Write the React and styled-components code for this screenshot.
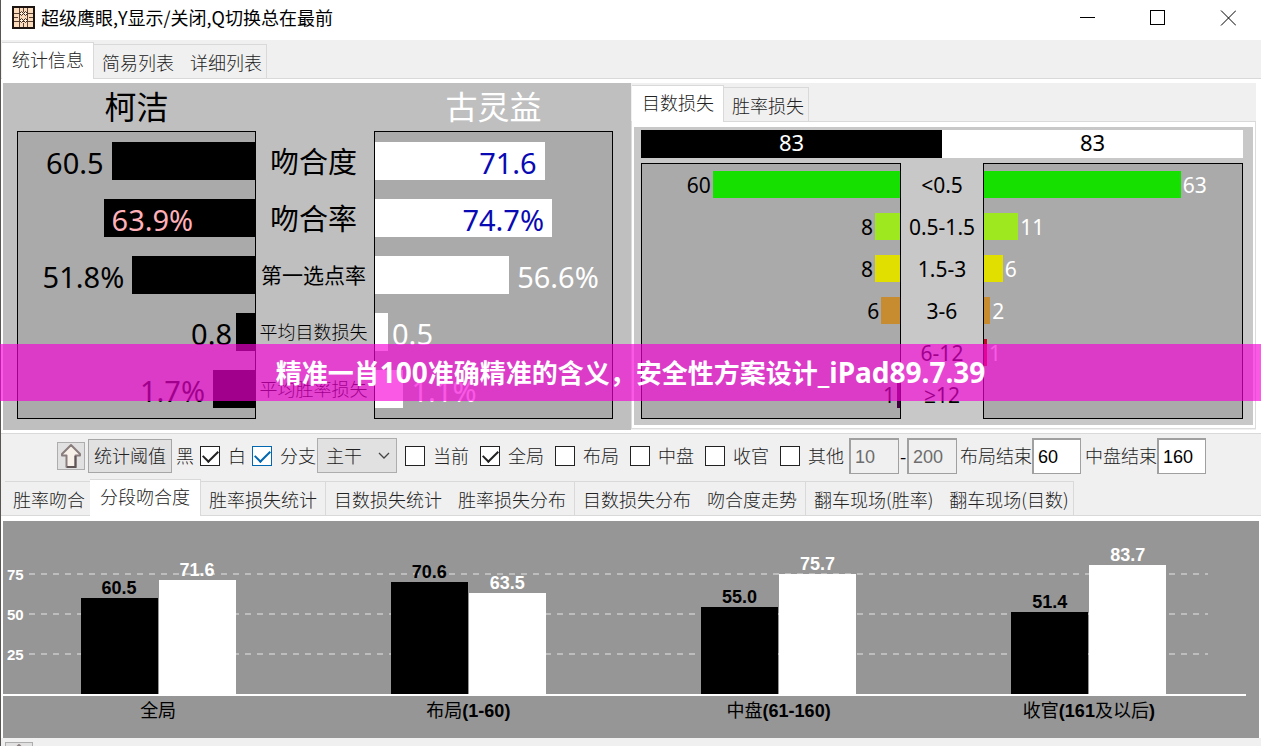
import React from "react"
import styled, { createGlobalStyle } from "styled-components"

const GlobalStyle = createGlobalStyle`
  * {
    box-sizing: border-box;
  }

  html, body {
    margin: 0;
    overflow: hidden;
  }

  body {
    background: #f0f0f0;
    color: #000;
    font-family: "Noto Sans CJK SC", sans-serif;
    font-size: 18px;
  }

  button, input, select {
    margin: 0;
    color: inherit;
    font: inherit;
  }
`;

const Window = styled.div`
  position: relative;
  min-height: 100vh;
  border-left: 1px solid #5a5454;
  background: #f0f0f0;
`;

/* title bar */

const TitleBar = styled.header`
  display: flex;
  align-items: center;
  height: 40px;
  padding-left: 11px;
  background: #fff;
`;

const Title = styled.h1`
  flex: 1;
  margin: 0 0 6px 6px;
  font-size: 18px;
  font-weight: 400;
  line-height: 24px;
`;

const WindowButtons = styled.div`
  display: flex;
  gap: 4px;
  margin-bottom: 4px;
`;

const WindowButton = styled.button`
  display: flex;
  align-items: center;
  justify-content: center;
  width: 66px;
  height: 32px;
  padding: 0;
  border: 0;
  background: none;
`;

const AppIcon = styled.svg`
  margin-bottom: 6px;
`;

/* tabs */

const TabStrip = styled.nav`
  display: flex;
  align-items: flex-end;
  height: 39px;
  padding-left: ${(props) => props.$indent || 0}px;
  border-bottom: 1px solid #d9d9d9;
  background: #f0f0f0;
`;

const Tab = styled.button`
  height: ${(props) => (props.$active ? 37 : 34)}px;
  margin-bottom: ${(props) => (props.$active ? -1 : 0)}px;
  padding: ${(props) => (props.$active ? "0 10px 4px" : "0 8px")};
  border: 0 solid #d9d9d9;
  border-top-width: 1px;
  border-right-width: ${(props) => (props.$divider || props.$active ? 1 : 0)}px;
  background: ${(props) => (props.$active ? "#fff" : "#f0f0f0")};
  color: #222;
  font-weight: 300;
  line-height: 24px;
  white-space: nowrap;

  &:first-child:not(:only-child) {
    padding-right: ${(props) => (props.$active ? 9 : 5)}px;
  }

  &:last-child {
    padding-right: 4px;
  }
`;

const Sheet = styled.section`
  padding: ${(props) => props.$top}px 2px ${(props) => props.$bottom || 0}px;
  background: #fff;
`;

const Columns = styled.div`
  display: grid;
  grid-template-columns: 1fr 1fr;
`;

/* match panel */

const MatchPanel = styled.div`
  display: grid;
  grid-template-columns: 1fr 118px 1fr;
  grid-template-rows: 48px auto;
  padding: 0 18px 11px 14px;
  background: #bfbfbf;
`;

const PlayerName = styled.h2`
  margin: 0;
  color: ${(props) => props.$color};
  font-size: 32px;
  font-weight: 400;
  line-height: 44px;
  text-align: center;
`;

const Frame = styled.div`
  display: flex;
  flex-direction: column;
  gap: ${(props) => props.$gap}px;
  padding: ${(props) => props.$pad};
  border: 1px solid #000;
  background: #aaa;
`;

const Labels = styled.div`
  display: flex;
  flex-direction: column;
  gap: ${(props) => props.$gap}px;
  padding: ${(props) => props.$pad};
  margin: 1px 0;
`;

const MatchRow = styled.div`
  display: flex;
  flex-direction: ${(props) => (props.$mirror ? "row-reverse" : "row")};
  height: 38px;
`;

const MatchBar = styled.div`
  display: flex;
  justify-content: ${(props) => (props.$mirror ? "flex-start" : "flex-end")};
  background: ${(props) => (props.$mirror ? "#000" : "#fff")};
`;

const MatchValue = styled.span`
  padding: 0 ${(props) => props.$space}px;
  color: ${(props) => props.$color};
  font-family: "Noto Sans", "Open Sans", sans-serif;
  font-size: 29px;
  line-height: 42px;
`;

const MatchLabel = styled.span`
  height: 38px;
  padding-right: 3px;
  font-size: ${(props) => props.$size}px;
  font-weight: ${(props) => (props.$size === 18 ? 300 : 400)};
  line-height: 36px;
  text-align: center;
  white-space: nowrap;
`;

/* loss panel */

const LossPanel = styled.div`
  margin-right: 3px;
  background: #f0f0f0;
`;

const LossBody = styled.div`
  padding: 5px 2px 3px;
  border: 1px solid #dcdcdc;
  border-top: 0;
  background: #fff;
`;

const LossChart = styled.div`
  display: grid;
  grid-template-columns: 1fr 82px 1fr;
  row-gap: 5px;
  padding: 3px 10px 6px 7px;
  background: #c8c8c8;
`;

const Score = styled.div`
  display: grid;
  grid-column: 1 / -1;
  grid-template-columns: 1fr 1fr;
  height: 28px;
`;

const ScoreSide = styled.div`
  background: ${(props) => props.$background};
  color: ${(props) => props.$color};
  font-family: "Noto Sans", "Open Sans", sans-serif;
  font-size: 22px;
  line-height: 24px;
  text-align: center;
`;

const LossRow = styled.div`
  display: flex;
  flex-direction: ${(props) => (props.$mirror ? "row-reverse" : "row")};
  gap: 2px;
  height: 27px;
  color: ${(props) => (props.$mirror ? "#000" : "#fff")};
`;

const LossBar = styled.div`
  background: ${(props) => props.$color};
`;

const LossText = styled.span`
  height: 27px;
  font-family: "Noto Sans", "Open Sans", sans-serif;
  font-size: 21px;
  line-height: 29px;
  text-align: center;
`;

/* toolbar */

const Toolbar = styled.form`
  display: flex;
  align-items: center;
  height: 44px;
  padding-left: 56px;
  border-top: 1px solid #d9d9d9;
  color: #222;
  font-weight: 300;
  line-height: 24px;
  white-space: nowrap;
`;

const IconButton = styled.button`
  display: flex;
  align-items: center;
  justify-content: center;
  width: 28px;
  height: 28px;
  margin-right: 3px;
  padding: 0;
  border: 1px solid #adadad;
  background: #e1e1e1;
`;

const PushButton = styled.button`
  width: 84px;
  height: 34px;
  margin-right: 4px;
  padding: 0 0 2px;
  border: 1px solid #a6a6a6;
  background: #e1e1e1;
`;

const Caption = styled.label`
  padding-bottom: 2px;
  margin-right: ${(props) => props.$space || 0}px;
`;

const CheckBox = styled.input.attrs({ type: "checkbox" })`
  display: flex;
  justify-content: center;
  width: 20px;
  height: 20px;
  margin-right: 8px;
  appearance: none;
  border: 1px solid ${(props) => (props.$focus ? "#0067b0" : "#222")};
  background: #fff;
  color: ${(props) => (props.$focus ? "#0067b0" : "#222")};

  &:checked::after {
    content: "";
    width: 7px;
    height: 13px;
    border: solid currentColor;
    border-width: 0 2px 2px 0;
    transform: rotate(45deg);
  }
`;

const SelectBox = styled.div`
  display: grid;
  align-items: center;
  width: 80px;
  margin-right: 8px;

  > * {
    grid-area: 1 / 1;
  }

  > svg {
    justify-self: end;
    margin-right: 7px;
    pointer-events: none;
  }
`;

const Select = styled.select`
  width: 80px;
  height: 35px;
  padding: 0 8px 2px;
  appearance: none;
  border: 1px solid #adadad;
  border-radius: 0;
  background: #e1e1e1;
  font-weight: 300;
`;

const NumberBox = styled.input`
  width: ${(props) => (props.disabled ? 50 : 49)}px;
  height: 36px;
  margin-right: ${(props) => props.$space || 0}px;
  padding: 2px 4px 0;
  border: 1px solid #a0a0a0;
  border-top-width: 2px;
  border-left-width: 2px;
  background: ${(props) => (props.disabled ? "#f0f0f0" : "#fff")};
  color: ${(props) => (props.disabled ? "#6d6d6d" : "#000")};
  font-family: "Liberation Sans", sans-serif;
  font-weight: 400;
`;

const Dash = styled.span`
  width: 8px;
  color: #000;
  font-weight: 400;
  text-align: center;
`;

/* phase chart */

const PhaseChart = styled.div`
  padding: 0 13px 13px 0;
  background: #969696;
`;

const Plot = styled.div`
  display: grid;
  height: 175px;
  border-bottom: 2px solid #fff;

  > * {
    grid-area: 1 / 1;
  }
`;

const Scale = styled.div`
  padding: 33px 38px 0 4px;
`;

const ScaleRow = styled.div`
  display: flex;
  align-items: center;
  gap: 5px;
  height: 40px;
  color: #fff;
  font-family: "Liberation Sans", sans-serif;
  font-size: 15px;
  font-weight: 700;

  &::after {
    content: "";
    flex: 1;
    height: 2px;
    background: repeating-linear-gradient(90deg, #bdbdbd 0 6px, transparent 6px 12px);
  }
`;

const Phases = styled.div`
  display: grid;
  grid-template-columns: repeat(4, 1fr);
  padding-right: 2px;
`;

const PhaseBars = styled.div`
  display: flex;
  align-items: flex-end;
  justify-content: center;
  gap: 1px;
`;

const PhaseSide = styled.div`
  width: 77px;
  color: ${(props) => props.$color};
  font-family: "Liberation Sans", sans-serif;
  font-weight: 700;
  line-height: 20px;
  text-align: center;
`;

const PhaseBar = styled.div`
  background: currentColor;
`;

const PhaseName = styled.span`
  line-height: 27px;
  text-align: center;

  b {
    font-family: "Liberation Sans", sans-serif;
  }
`;

const Footer = styled.footer`
  display: flex;
  align-items: center;
  gap: 28px;
  padding: 3px 4px 0;
  color: #222;
  font-weight: 300;
  white-space: nowrap;

  span {
    padding-bottom: 4px;
  }
`;

/* banner over the window */

const Banner = styled.div`
  position: absolute;
  top: 344px;
  right: 0;
  left: -1px;
  height: 57px;
  background: rgba(246, 0, 215, 0.65);
  color: #fff;
  font-size: 26px;
  font-weight: 700;
  line-height: 55px;
  text-align: center;
  white-space: nowrap;
`;

const Latin = styled.span`
  font-family: "Noto Sans", "Open Sans", sans-serif;
  font-size: 28px;
`;

const matchRows = [
  { label: "吻合度", size: 29, black: ["60.5", 60.5], white: ["71.6", 71.6] },
  { label: "吻合率", size: 29, black: ["63.9%", 63.9], white: ["74.7%", 74.7] },
  { label: "第一选点率", size: 21, black: ["51.8%", 51.8], white: ["56.6%", 56.6] },
  { label: "平均目数损失", size: 18, black: ["0.8", 8], white: ["0.5", 5.5] },
  { label: "平均胜率损失", size: 18, black: ["1.7%", 17.7], white: ["1.1%", 12] },
];

const lossRows = [
  { label: "<0.5", color: "#15e000", black: 60, white: 63 },
  { label: "0.5-1.5", color: "#9de81f", black: 8, white: 11 },
  { label: "1.5-3", color: "#e0df00", black: 8, white: 6 },
  { label: "3-6", color: "#c88c30", black: 6, white: 2 },
  { label: "6-12", color: "#c80a28", black: 0, white: 1 },
  { label: "≥12", color: "#400040", black: 1, white: 0 },
];

const phases = [
  { name: "全局", black: 60.5, white: 71.6 },
  { name: "布局", range: "(1-60)", black: 70.6, white: 63.5 },
  { name: "中盘", range: "(61-160)", black: 55, white: 75.7 },
  { name: "收官", range: "(161", rest: "及以后", close: ")", black: 51.4, white: 83.7 },
];

const filters = [
  ["当前", false],
  ["全局", true],
  ["布局", false],
  ["中盘", false],
  ["收官", false],
  ["其他", false],
];

const barHeight = (value) => Math.min(Math.round(value * 1.59), 129);

function MatchSide({ side }) {
  const mirror = side === "black";
  // the value moves into the bar once the bar is long enough
  const limit = mirror ? 62 : 60;
  return (
    <Frame $gap={19} $pad="10px 0">
      {matchRows.map((row) => {
        const [text, width] = row[side];
        const inside = width > limit;
        const insideColor = mirror ? "#ffb0b8" : "#0a0ab4";
        const value = (
          <MatchValue
            $space={width < 10 ? 4 : 8}
            $color={inside ? insideColor : mirror ? "#000" : "#fff"}
          >
            {text}
          </MatchValue>
        );
        return (
          <MatchRow key={row.label} $mirror={mirror}>
            <MatchBar $mirror={mirror} style={{ width: `${width}%` }}>
              {inside && value}
            </MatchBar>
            {!inside && value}
          </MatchRow>
        );
      })}
    </Frame>
  );
}

function LossSide({ side }) {
  const mirror = side === "black";
  return (
    <Frame $gap={15} $pad="7px 0 10px">
      {lossRows.map((row) => (
        <LossRow key={row.label} $mirror={mirror}>
          {row[side] > 0 && (
            <>
              <LossBar $color={row.color} style={{ width: `${row[side] * 1.21}%` }} />
              <LossText>{row[side]}</LossText>
            </>
          )}
        </LossRow>
      ))}
    </Frame>
  );
}

function Check({ id, name, checked, focus, space }) {
  return (
    <>
      <CheckBox id={id} defaultChecked={checked} $focus={focus} />
      <Caption htmlFor={id} $space={space}>{name}</Caption>
    </>
  );
}

function ArrowIcon() {
  return (
    <svg width="24" height="26" viewBox="0 0 24 26">
      <path
        d="M12 2 L21 11 V12.500 H16.500 V24 H7.500 V12.500 H3 V11 Z"
        fill="#f8f1ea"
        stroke="#8a7d7d"
        strokeWidth="2"
        strokeLinejoin="round"
      />
      <path d="M16.500 13 V24 H8" fill="none" stroke="#5f5456" strokeWidth="2" />
    </svg>
  );
}

function App() {
  return (
    <>
      <GlobalStyle />
      <Window>
        <TitleBar>
          <AppIcon width="23" height="23" viewBox="0 0 23 23">
            <rect x="1" y="1" width="21" height="21" fill="#fbdcbc" stroke="#1c1410" strokeWidth="2" />
            <path
              d="M2 7.500H21M2 15.500H21M7.500 2V21M15.500 2V21M11.500 2V6M11.500 17V21M2 11.500H6M17 11.500H21"
              stroke="#5a4232"
              strokeWidth="1"
            />
            <path
              d="M9.500 5.500l2 2-2 2-2-2zM13.500 5.500l2 2-2 2-2-2zM9.500 12.500l2 2-2 2-2-2zM13.500 12.500l2 2-2 2-2-2z"
              fill="#fff0dc"
              stroke="#3a281c"
              strokeWidth="1"
            />
          </AppIcon>
          <Title>超级鹰眼,Y显示/关闭,Q切换总在最前</Title>
          <WindowButtons>
            <WindowButton aria-label="最小化">
              <svg width="16" height="16" viewBox="0 0 16 16">
                <path d="M0 7.500H15" stroke="#000" />
              </svg>
            </WindowButton>
            <WindowButton aria-label="最大化">
              <svg width="16" height="16" viewBox="0 0 16 16">
                <rect x="0.500" y="0.500" width="14" height="14" fill="none" stroke="#000" />
              </svg>
            </WindowButton>
            <WindowButton aria-label="关闭">
              <svg width="16" height="16" viewBox="0 0 16 16">
                <path d="M1 0.500L16 15.500M16 0.500L1 15.500" stroke="#000" />
              </svg>
            </WindowButton>
          </WindowButtons>
        </TitleBar>

        <TabStrip $indent={1}>
          <Tab $active>统计信息</Tab>
          <Tab>简易列表</Tab>
          <Tab $divider>详细列表</Tab>
        </TabStrip>

        <Sheet $top={4} $bottom={3}>
          <Columns>
            <MatchPanel>
              <PlayerName $color="#000">柯洁</PlayerName>
              <span />
              <PlayerName $color="#fff">古灵益</PlayerName>
              <MatchSide side="black" />
              <Labels $gap={19} $pad="10px 0">
                {matchRows.map((row) => (
                  <MatchLabel key={row.label} $size={row.size}>{row.label}</MatchLabel>
                ))}
              </Labels>
              <MatchSide side="white" />
            </MatchPanel>

            <LossPanel>
              <TabStrip $indent={1}>
                <Tab $active>目数损失</Tab>
                <Tab $divider>胜率损失</Tab>
              </TabStrip>
              <LossBody>
                <LossChart>
                  <Score>
                    <ScoreSide $background="#000" $color="#fff">83</ScoreSide>
                    <ScoreSide $background="#fff" $color="#000">83</ScoreSide>
                  </Score>
                  <LossSide side="black" />
                  <Labels $gap={15} $pad="7px 0 10px">
                    {lossRows.map((row) => (
                      <LossText key={row.label}>{row.label}</LossText>
                    ))}
                  </Labels>
                  <LossSide side="white" />
                </LossChart>
              </LossBody>
            </LossPanel>
          </Columns>
        </Sheet>

        <Toolbar>
          <IconButton type="button" aria-label="上移">
            <ArrowIcon />
          </IconButton>
          <PushButton type="button">统计阈值</PushButton>
          <Caption as="span" $space={6}>黑</Caption>
          <Check id="white" name="白" checked space={6} />
          <Check id="branch" name="分支" checked focus space={1} />
          <SelectBox>
            <Select aria-label="分支" defaultValue="主干">
              <option>主干</option>
            </Select>
            <svg width="12" height="8" viewBox="0 0 12 8">
              <path d="M1 1l5 5 5-5" fill="none" stroke="#444" strokeWidth="1.3" />
            </svg>
          </SelectBox>
          {filters.map(([name, checked], i) => (
            <Check
              key={name}
              id={`filter-${i}`}
              name={name}
              checked={checked}
              space={i === filters.length - 1 ? 5 : 11}
            />
          ))}
          <NumberBox aria-label="起始手数" defaultValue="10" disabled />
          <Dash>-</Dash>
          <NumberBox aria-label="结束手数" defaultValue="200" disabled $space={3} />
          <Caption htmlFor="opening-end">布局结束</Caption>
          <NumberBox id="opening-end" defaultValue="60" $space={4} />
          <Caption htmlFor="middle-end">中盘结束</Caption>
          <NumberBox id="middle-end" defaultValue="160" />
        </Toolbar>

        <TabStrip $indent={4}>
          <Tab>胜率吻合</Tab>
          <Tab $active>分段吻合度</Tab>
          <Tab $divider>胜率损失统计</Tab>
          <Tab>目数损失统计</Tab>
          <Tab $divider>胜率损失分布</Tab>
          <Tab>目数损失分布</Tab>
          <Tab $divider>吻合度走势</Tab>
          <Tab>翻车现场(胜率)</Tab>
          <Tab $divider>翻车现场(目数)</Tab>
        </TabStrip>

        <Sheet $top={5}>
          <PhaseChart>
            <Plot>
              <Scale>
                <ScaleRow>75</ScaleRow>
                <ScaleRow>50</ScaleRow>
                <ScaleRow>25</ScaleRow>
              </Scale>
              <Phases>
                {phases.map((phase) => (
                  <PhaseBars key={phase.name}>
                    <PhaseSide $color="#000">
                      {phase.black.toFixed(1)}
                      <PhaseBar style={{ height: barHeight(phase.black) }} />
                    </PhaseSide>
                    <PhaseSide $color="#fff">
                      {phase.white.toFixed(1)}
                      <PhaseBar style={{ height: barHeight(phase.white) }} />
                    </PhaseSide>
                  </PhaseBars>
                ))}
              </Phases>
            </Plot>
            <Phases>
              {phases.map((phase) => (
                <PhaseName key={phase.name}>
                  {phase.name}
                  <b>{phase.range}</b>
                  {phase.rest}
                  <b>{phase.close}</b>
                </PhaseName>
              ))}
            </Phases>
          </PhaseChart>
        </Sheet>

        <Footer>
          <IconButton type="button" aria-label="下移">
            <ArrowIcon />
          </IconButton>
          <span>分支</span>
          <span>布局</span>
          <span>全局</span>
          <span>前</span>
          <span>中盘</span>
          <span>收官</span>
          <span>前</span>
          <span>布局</span>
          <span>全局</span>
          <span>前</span>
          <span>中盘</span>
          <span>收官</span>
          <span>前</span>
        </Footer>

        <Banner>
          精准一肖<Latin>100</Latin>准确精准的含义，安全性方案设计<Latin>_iPad89.7.39</Latin>
        </Banner>
      </Window>
    </>
  );
}

export default App;
